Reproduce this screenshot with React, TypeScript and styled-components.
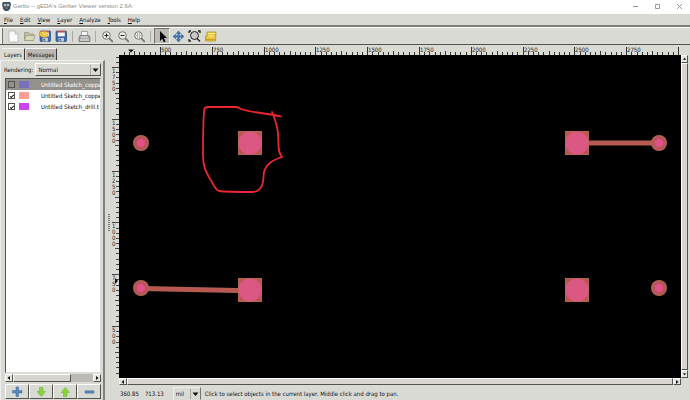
import React from "react";
import styled, { createGlobalStyle } from "styled-components";

const GlobalStyle = createGlobalStyle`
  *, *::before, *::after { box-sizing: border-box; }
  html, body { margin: 0; height: 100%; }
  #root { height: 100%; }
  body, button, select, input {
    font-family: "DejaVu Sans Condensed", "Noto Sans", sans-serif;
    font-size: 6px;
    line-height: 8px;
    color: #111;
  }
  button { padding: 0; cursor: default; }
`;

const Window = styled.div`
  display: flex;
  flex-direction: column;
  height: 100vh;
  overflow: hidden;
  background: #dadad5;
`;

const TitleBar = styled.header`
  display: flex;
  align-items: center;
  gap: 2px;
  flex: 0 0 14px;
  padding: 0 1px 2px 2px;
  background: #fff;
  color: #8c8c8c;
`;

const Title = styled.h1`
  flex: 1;
  margin: 0;
  font-family: "Liberation Sans", Arial, sans-serif;
  font-size: 6px;
  font-weight: 400;
  white-space: nowrap;
`;

const WindowButton = styled.button`
  display: flex;
  align-items: center;
  justify-content: center;
  width: 20px;
  height: 12px;
  border: 0;
  background: none;
`;

const MenuBar = styled.nav`
  display: flex;
  align-items: center;
  gap: 7px;
  flex: 0 0 13px;
  padding: 0 4px;
  border-bottom: 2px solid #817e7a;
`;

const MenuItem = styled.button`
  border: 0;
  background: none;
  white-space: nowrap;
`;

const Toolbar = styled.div`
  display: flex;
  align-items: stretch;
  flex: 0 0 18px;
  padding-left: 5px;
  border-top: 1px solid #fff;
  border-bottom: 1px solid #55524f;
  box-shadow: inset 2px 0 #eee, inset 3px 0 #77736f;
`;

const ToolButton = styled.button<{ $active?: boolean }>`
  display: flex;
  align-items: center;
  justify-content: center;
  flex: 0 0 16px;
  border: 1px solid transparent;
  background: ${(p) => (p.$active ? "#bdbab5" : "none")};
  border-color: ${(p) => (p.$active ? "#77736f #eee #eee #77736f" : "transparent")};
`;

const ToolSeparator = styled.span`
  width: 1px;
  height: 11px;
  margin: 3px 3px 0;
  background: #aaa7a2;
`;

const Main = styled.main`
  display: flex;
  flex: 1;
  min-height: 0;
`;

const Sidebar = styled.aside`
  display: flex;
  flex-direction: column;
  flex: 0 0 105px;
  min-width: 0;
  min-height: 0;
  padding-top: 3px;
`;

const Tabs = styled.div`
  display: flex;
  flex: 0 0 12px;
  padding-left: 2px;
  gap: 1px;
`;

const Tab = styled.button<{ $active?: boolean }>`
  padding: 0 2px;
  border: 0;
  border-top: 1px solid #f4f4f1;
  border-right: 1px solid #3e3b38;
  background: ${(p) => (p.$active ? "#dadad5" : "#bcb9b4")};
`;

const Panel = styled.section`
  display: flex;
  flex-direction: column;
  flex: 1;
  min-height: 0;
  padding: 2px 2px 1px 4px;
  border-top: 1px solid #eee;
  border-left: 1px solid #eee;
  border-right: 2px solid #84807c;
`;

const RenderRow = styled.label`
  display: flex;
  align-items: center;
  gap: 2px;
  flex: 0 0 13px;
  margin-left: -1px;
  white-space: nowrap;
`;

const SelectFrame = styled.span`
  display: grid;
  flex: 1;
  align-items: center;
  height: 13px;
  border: 1px solid;
  border-color: #fff #55524f #55524f #fff;
  & > * { grid-area: 1 / 1; }
  & > svg { justify-self: end; margin-right: 1px; pointer-events: none; }
`;

const Select = styled.select`
  appearance: none;
  width: 100%;
  padding: 0 2px;
  border: 0;
  background: none;
`;

const LayerList = styled.ul`
  flex: 1;
  min-width: 0;
  min-height: 0;
  margin: 2px 0 1px;
  padding: 0;
  overflow: hidden;
  list-style: none;
  background: #fff;
  border: 1px solid;
  border-color: #55524f #ddd #ddd #55524f;
`;

const LayerRow = styled.li<{ $selected?: boolean }>`
  background: ${(p) => (p.$selected ? "#93918b" : "#fff")};
  color: ${(p) => (p.$selected ? "#fff" : "#111")};
`;

const LayerLabel = styled.label`
  display: flex;
  align-items: center;
  height: 11px;
  padding-left: 2px;
  white-space: nowrap;
`;

const LayerCheck = styled.input`
  appearance: none;
  display: grid;
  place-items: center;
  flex: 0 0 7px;
  height: 7px;
  margin: 0 4px 0 0;
  border: 1px solid #55524f;
  &:checked::after {
    content: "";
    width: 4px;
    height: 2px;
    border-left: 1px solid #111;
    border-bottom: 1px solid #111;
    transform: rotate(-45deg);
  }
`;

const Swatch = styled.span<{ $color: string }>`
  flex: 0 0 10px;
  height: 7px;
  margin-right: 12px;
  background: ${(p) => p.$color};
`;

const LayerActions = styled.div`
  display: grid;
  grid-template-columns: repeat(4, 1fr);
  flex: 0 0 15px;
  margin-top: 2px;
`;

const ActionButton = styled.button`
  display: flex;
  align-items: center;
  justify-content: center;
  border: 1px solid;
  border-color: #fff #55524f #55524f #fff;
  background: #dadad5;
`;

const ScrollBar = styled.div<{ $vertical?: boolean }>`
  display: flex;
  flex: 0 0 7px;
  flex-direction: ${(p) => (p.$vertical ? "column" : "row")};
  background: #bdbab5;
`;

const ScrollButton = styled.button`
  display: flex;
  align-items: center;
  justify-content: center;
  flex: 0 0 7px;
  border: 1px solid;
  border-color: #fff #55524f #55524f #fff;
  background: #e6e5e1;
`;

const ScrollThumb = styled.span<{ $share: number }>`
  flex: ${(p) => p.$share} 1 0;
  border: 1px solid;
  border-color: #fff #55524f #55524f #fff;
  background: #d8d5d1;
`;

const ScrollTrack = styled.span<{ $share: number }>`
  flex: ${(p) => p.$share} 1 0;
`;

const Splitter = styled.div`
  display: flex;
  align-items: center;
  justify-content: center;
  flex: 0 0 7px;
`;

const Grip = styled.span`
  width: 2px;
  height: 17px;
  background: repeating-linear-gradient(#77736f 0 1px, transparent 1px 2px);
`;

const Workspace = styled.section`
  display: flex;
  flex-direction: column;
  flex: 1;
  min-width: 0;
`;

const ViewGrid = styled.div`
  display: grid;
  grid-template-columns: 7px 1fr 7px;
  grid-template-rows: 10px 1fr 7px;
  flex: 1;
  min-height: 0;
  padding-right: 2px;
`;

const Corner = styled.span``;

const Drawing = styled.svg`
  display: block;
  width: 100%;
  height: 100%;
  min-width: 0;
  min-height: 0;
  overflow: hidden;
  font-family: "DejaVu Sans Condensed", "Noto Sans", sans-serif;
  font-size: 6px;
`;

const Board = styled(Drawing)`
  background: #000;
`;

const StatusBar = styled.footer`
  display: flex;
  align-items: center;
  flex: 0 0 15px;
  padding: 2px 0 0 8px;
  white-space: nowrap;
`;

const Coordinate = styled.output`
  margin-right: 6px;
`;

const UnitFrame = styled(SelectFrame)`
  flex: 0 0 28px;
  border-color: #eee #77736f #dadad5 #eee;
  margin: 0 4px 0 3px;
`;

const Arrow = ({ dir }: { dir: "left" | "right" | "up" | "down" }) => {
  const d = {
    left: "M4 1v4L1.500 3z",
    right: "M2 1v4l2.500-2z",
    up: "M1 4h4L3 1.500z",
    down: "M1 2h4L3 4.500z",
  }[dir];
  return (
    <svg width="6" height="6" viewBox="0 0 6 6" aria-hidden="true">
      <path d={d} fill="#111" />
    </svg>
  );
};

const DropArrow = () => (
  <svg width="9" height="10" viewBox="0 0 9 10" aria-hidden="true">
    <path d="M.5 0v10" stroke="#aaa7a2" />
    <path d="M2.500 3.500h6l-3 3.500z" fill="#111" />
  </svg>
);

const Glass = ({ children }: { children?: React.ReactNode }) => (
  <>
    <path d="M8.300 8.300l3 3" stroke="#77746f" strokeWidth="1.800" strokeLinecap="round" />
    <circle cx="5.500" cy="5.500" r="3.800" fill="#eee" stroke="#77746f" />
    {children}
  </>
);

const Floppy = ({ children }: { children?: React.ReactNode }) => (
  <>
    <rect x="1" y="1" width="10.500" height="10.500" rx="1" fill="#3e68ac" stroke="#27477f" strokeWidth=".7" />
    <rect x="2.800" y="1.300" width="7" height="5" fill="#f7f7f7" />
    <path d="M2.800 1.800h7" stroke="#d23c35" strokeWidth="1.400" />
    <path d="M3.500 8h5.500v3.500H3.500z" fill="#c4c8cf" />
    <path d="M4.500 8.700h1.300v2H4.500z" fill="#334c77" />
    {children}
  </>
);

const icons: Record<string, React.ReactNode> = {
  New: (
    <>
      <path d="M2 1h6l3 3v8H2z" fill="#fafafa" stroke="#aaa" strokeWidth=".7" />
      <path d="M8 1v3h3" fill="#ddd" stroke="#aaa" strokeWidth=".6" />
    </>
  ),
  Open: (
    <>
      <path d="M1.500 10.500V2.500h4l1 1.500h4v6.500z" fill="#bfc0a2" stroke="#92937b" strokeWidth=".7" />
      <path d="M1.500 10.500l1.500-5h9l-1.500 5z" fill="#d9dab9" stroke="#96977f" strokeWidth=".7" />
    </>
  ),
  Revert: (
    <Floppy>
      <path d="M1 1.500h7l1.500 2L8 7.500H4L1 6z" fill="#f1bd36" />
      <path d="M3 2l3 3 2-2" stroke="#fff2a0" fill="none" />
    </Floppy>
  ),
  Save: <Floppy />,
  Print: (
    <>
      <path d="M3.500 1.500h6V6h-6z" fill="#f4f4f4" stroke="#888" strokeWidth=".7" />
      <path d="M2 5.500h9l1 2v4H1v-4z" fill="#aaa" stroke="#74716f" strokeWidth=".8" />
      <path d="M3 7h7M2 10h9" stroke="#e4e4e4" />
    </>
  ),
  "Zoom in": <Glass><path d="M3.500 5.500h4M5.500 3.500v4" stroke="#222" /></Glass>,
  "Zoom out": <Glass><path d="M3.500 5.500h4" stroke="#222" /></Glass>,
  "Fit to window": <Glass><path d="M4 4h3v3H4z" stroke="#777" strokeDasharray="1 1" fill="none" /></Glass>,
  Pointer: <path d="M4 1v10l2.300-2.300 1.500 3.500 1.700-.8L8 8h3z" fill="#080808" />,
  Pan: (
    <path d="M6.500 1l2.200 2.500H7.200v2.300h2.300V4.300L12 6.500 9.500 8.700V7.200H7.200v2.300h1.500L6.500 12 4.300 9.500h1.500V7.200H3.500v1.500L1 6.500l2.500-2.200v1.500h2.300V3.500H4.300z" fill="#4778b6" stroke="#275584" strokeWidth=".5" />
  ),
  "Zoom area": (
    <>
      <circle cx="6.500" cy="5.500" r="4" fill="#c9c7c3" stroke="#222" />
      <path d="M9 8.500l3 3M1 1h2M1 1v2M10 1h2v2M1 9v2h2" stroke="#222" strokeWidth="1.300" fill="none" />
    </>
  ),
  Measure: (
    <>
      <path d="M3 2h9l-.5 9h-10V6H3z" fill="#e8c93b" stroke="#b8921f" strokeWidth=".8" />
      <path d="M4 3.500h7M4.500 6h5" stroke="#fff09a" />
      <path d="M2 9.500h9" stroke="#c59d22" />
    </>
  ),
};

const Tool = ({ name, active }: { name: string; active?: boolean }) => (
  <ToolButton aria-label={name} $active={active}>
    <svg width="13" height="13" viewBox="0 0 13 13" aria-hidden="true">{icons[name]}</svg>
  </ToolButton>
);

const actionShapes = [
  { name: "Add layer", color: "#5b87bd", edge: "#41699d", d: "M5 1h2.500v3.500H11V7H7.500v3.500H5V7H1.500V4.500H5z" },
  { name: "Move layer down", color: "#8ad23e", edge: "#5fae2a", d: "M4.500 1.500h3.500v4h2.500l-4.300 5-4.200-5h2.500z" },
  { name: "Move layer up", color: "#8ad23e", edge: "#5fae2a", d: "M4.500 10.500h3.500v-4h2.500l-4.300-5-4.200 5h2.500z" },
  { name: "Remove layer", color: "#5b87bd", edge: "#41699d", d: "M2 4.800h9v2.400H2z" },
];

const layers = [
  { name: "Untitled Sketch_coppe", color: "#7772bd", visible: false, selected: true },
  { name: "Untitled Sketch_coppe", color: "#ff9c94", visible: true, selected: false },
  { name: "Untitled Sketch_drill.t", color: "#cb45e8", visible: true, selected: false },
];

const STEP = 51.8;
const TOP_START = 41;
const SIDE_START = 12;

const range = (from: number, to: number) => Array.from({ length: to - from }, (_, i) => from + i);
const tickLength = (i: number) => (i % 5 === 0 ? 4 : 3);

const TopRuler = () => (
  <Drawing aria-label="Horizontal ruler">
    {range(-7, 101).map((i) => {
      const x = Math.round(TOP_START + (i * STEP) / 10);
      return <rect key={i} x={x} y={i % 10 === 0 ? 2 : 10 - tickLength(i)} width="1" height="8" fill="#333" />;
    })}
    {range(0, 10).map((i) => (
      <text key={i} x={Math.round(TOP_START + i * STEP) + 1} y="7" fill="#222">{500 + i * 250}</text>
    ))}
    <path d="M9 4.500h6l-3 3z" fill="#111" />
  </Drawing>
);

const SideRuler = () => (
  <Drawing aria-label="Vertical ruler">
    {range(-2, 62).map((i) => {
      const y = Math.round(SIDE_START + (i * STEP) / 10);
      return <rect key={i} x={i % 10 === 0 ? 0 : 7 - tickLength(i)} y={y} width="7" height="1" fill="#444" />;
    })}
    {range(0, 6).map((i) =>
      String(1750 - i * 250).split("").map((digit, n) => (
        <text key={`${i}-${n}`} x="0" y={Math.round(SIDE_START + i * STEP) + 6 + n * 6} fill="#222">{digit}</text>
      )),
    )}
    <path d="M3 223v6l3-3z" fill="#111" />
  </Drawing>
);

const SquarePad = ({ x, y }: { x: number; y: number }) => (
  <g>
    <rect x={x - 12} y={y - 12} width="24" height="24" fill="#b4694f" />
    <rect x={x - 11} y={y - 11} width="22" height="22" fill="#b9574f" />
    <circle cx={x} cy={y} r="11.500" fill="#dc5884" />
  </g>
);

const RoundPad = ({ x, y }: { x: number; y: number }) => (
  <g>
    <circle cx={x} cy={y} r="8" fill="#b3694f" />
    <circle cx={x} cy={y} r="7" fill="#b9555a" />
    <circle cx={x} cy={y} r="4" fill="#e2528a" />
  </g>
);

const BoardView = () => (
  <Board role="img" aria-label="Circuit board layers">
    <path d="M458 88h82M22 233.500l97 2" stroke="#b3624f" strokeWidth="5" />
    <path d="M458 88h82M22 233.500l97 2" stroke="#ba5752" strokeWidth="3" />
    <RoundPad x={22} y={88} />
    <SquarePad x={131} y={88} />
    <SquarePad x={458} y={88} />
    <RoundPad x={540} y={88} />
    <RoundPad x={22} y={233} />
    <SquarePad x={131} y={235} />
    <SquarePad x={458} y={235} />
    <RoundPad x={540} y={233} />
    <path
      d="M162 61.500C154 59 133 58 122 54c-2-1-3-2-5-2H90c-4 0-5 1-5 5-1 14-1 30-1 43 0 12 3 17 7 24 4 6 5 11 9 12 7 1 26 1 34 1 12-1 10-15 11-20 3-9 9-12 18-15-5-5-3-15-4-24-1-8-3-14-6-21"
      fill="none"
      stroke="#ee2630"
      strokeWidth="1.800"
      strokeLinecap="round"
      strokeLinejoin="round"
    />
  </Board>
);

export default function App() {
  return (
    <Window>
      <GlobalStyle />
      <TitleBar>
        <svg width="9" height="10" viewBox="0 0 9 10" aria-hidden="true">
          <path d="M1 1h7l1 2-1 5-2 2H3L1 8 0 3z" fill="#41515b" />
          <path d="M2 3h2v2H2zM5 3h2v2H5zM3 7h3" fill="#aebac2" stroke="#aebac2" strokeWidth=".5" />
        </svg>
        <Title>Gerbv -- gEDA's Gerber Viewer version 2.6A:</Title>
        <WindowButton aria-label="Minimize">
          <svg width="7" height="7" viewBox="0 0 7 7"><path d="M1 3.500h5" stroke="#999" /></svg>
        </WindowButton>
        <WindowButton aria-label="Maximize">
          <svg width="7" height="7" viewBox="0 0 7 7"><path d="M1.500 1.500h4v4h-4z" fill="none" stroke="#999" /></svg>
        </WindowButton>
        <WindowButton aria-label="Close">
          <svg width="7" height="7" viewBox="0 0 7 7"><path d="M1 1l5 5M6 1L1 6" stroke="#888" strokeWidth=".8" /></svg>
        </WindowButton>
      </TitleBar>
      <MenuBar>
        {["File", "Edit", "View", "Layer", "Analyze", "Tools", "Help"].map((name) => (
          <MenuItem key={name}><u>{name[0]}</u>{name.slice(1)}</MenuItem>
        ))}
      </MenuBar>
      <Toolbar>
        <Tool name="New" />
        <Tool name="Open" />
        <Tool name="Revert" />
        <Tool name="Save" />
        <ToolSeparator />
        <Tool name="Print" />
        <ToolSeparator />
        <Tool name="Zoom in" />
        <Tool name="Zoom out" />
        <Tool name="Fit to window" />
        <ToolSeparator />
        <Tool name="Pointer" active />
        <Tool name="Pan" />
        <Tool name="Zoom area" />
        <Tool name="Measure" />
      </Toolbar>
      <Main>
        <Sidebar>
          <Tabs>
            <Tab $active>Layers</Tab>
            <Tab>Messages</Tab>
          </Tabs>
          <Panel>
            <RenderRow>
              Rendering:
              <SelectFrame>
                <Select defaultValue="Normal"><option>Normal</option></Select>
                <DropArrow />
              </SelectFrame>
            </RenderRow>
            <LayerList>
              {layers.map((layer, i) => (
                <LayerRow key={i} $selected={layer.selected}>
                  <LayerLabel>
                    <LayerCheck type="checkbox" defaultChecked={layer.visible} />
                    <Swatch $color={layer.color} />
                    {layer.name}
                  </LayerLabel>
                </LayerRow>
              ))}
            </LayerList>
            <ScrollBar>
              <ScrollButton aria-label="Scroll left"><Arrow dir="left" /></ScrollButton>
              <ScrollThumb $share={59} />
              <ScrollTrack $share={23} />
              <ScrollButton aria-label="Scroll right"><Arrow dir="right" /></ScrollButton>
            </ScrollBar>
            <LayerActions>
              {actionShapes.map((shape) => (
                <ActionButton key={shape.name} aria-label={shape.name}>
                  <svg width="12" height="12" viewBox="0 0 12 12" aria-hidden="true">
                    <path d={shape.d} fill={shape.color} stroke={shape.edge} strokeWidth=".5" />
                  </svg>
                </ActionButton>
              ))}
            </LayerActions>
          </Panel>
        </Sidebar>
        <Splitter><Grip /></Splitter>
        <Workspace>
          <ViewGrid>
            <Corner />
            <TopRuler />
            <Corner />
            <SideRuler />
            <BoardView />
            <ScrollBar $vertical>
              <ScrollButton aria-label="Scroll up"><Arrow dir="up" /></ScrollButton>
              <ScrollThumb $share={1} />
              <ScrollButton aria-label="Scroll down"><Arrow dir="down" /></ScrollButton>
            </ScrollBar>
            <Corner />
            <ScrollBar>
              <ScrollButton aria-label="Scroll left"><Arrow dir="left" /></ScrollButton>
              <ScrollThumb $share={1} />
              <ScrollButton aria-label="Scroll right"><Arrow dir="right" /></ScrollButton>
            </ScrollBar>
            <Corner />
          </ViewGrid>
          <StatusBar>
            <Coordinate>360.85</Coordinate>
            <Coordinate>713.13</Coordinate>
            <UnitFrame>
              <Select aria-label="Units" defaultValue="mil"><option>mil</option></Select>
              <DropArrow />
            </UnitFrame>
            <span>Click to select objects in the current layer. Middle click and drag to pan.</span>
          </StatusBar>
        </Workspace>
      </Main>
    </Window>
  );
}
